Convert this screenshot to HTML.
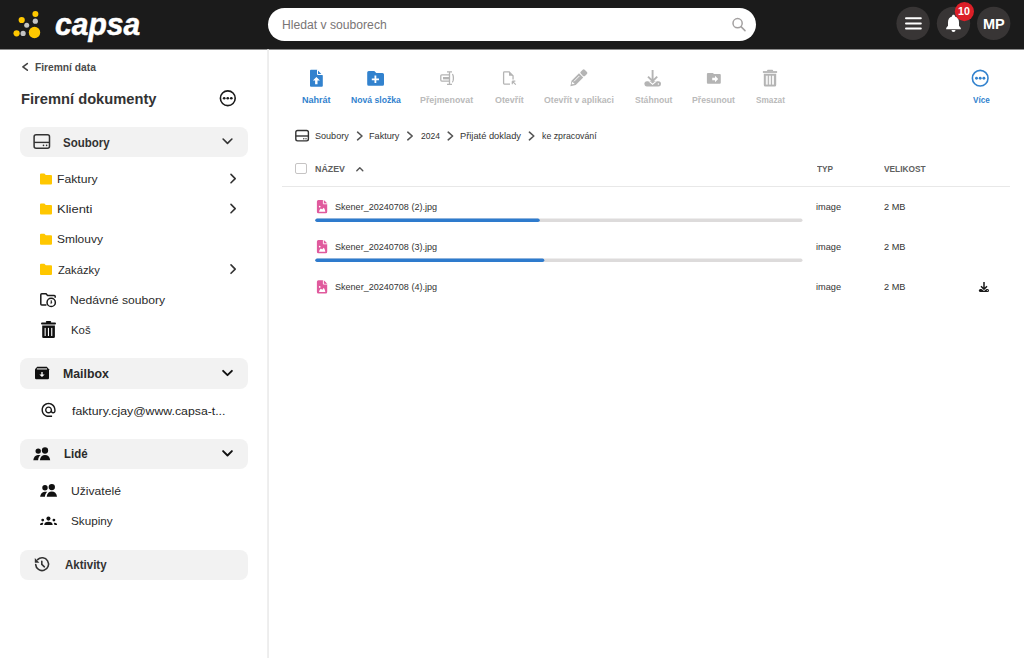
<!DOCTYPE html>
<html><head><meta charset="utf-8"><style>
html,body{margin:0;padding:0;width:1024px;height:658px;overflow:hidden;background:#fff;position:relative}
.t{position:absolute;font-family:"Liberation Sans",sans-serif;line-height:1;white-space:pre;transform-origin:0 0}
.a{position:absolute}
svg.a{overflow:visible}
</style></head><body>
<!-- header -->
<svg class="a" style="left:0;top:0" width="1024" height="52"><rect x="0" y="0" width="1024" height="49.5" fill="#1b1b1b"/></svg>
<svg class="a" style="left:0;top:0" width="60" height="49">
<g fill="#ffc800"><circle cx="35.4" cy="14.1" r="3"/><circle cx="21.7" cy="20" r="3.1"/><circle cx="16.6" cy="33.3" r="3.1"/><circle cx="34.5" cy="32.5" r="5.7"/></g>
<g fill="#c4c4c4"><circle cx="35.3" cy="21.2" r="2.6"/><circle cx="26.7" cy="25.3" r="2.5"/><circle cx="23.1" cy="33.4" r="2.6"/></g>
</svg>
<div class="a" style="left:268px;top:7.7px;width:488px;height:33.6px;border-radius:17px;background:#fff"></div>
<svg class="a" style="left:720px;top:8px" width="40" height="34">
<circle cx="17.6" cy="15.2" r="4.6" fill="none" stroke="#a3a0a0" stroke-width="1.5"/>
<line x1="21" y1="18.6" x2="25" y2="22.6" stroke="#a3a0a0" stroke-width="1.5" stroke-linecap="round"/>
</svg>
<svg class="a" style="left:880px;top:0" width="144" height="49"><g fill="#383535"><circle cx="33.1" cy="23.35" r="16.7"/><circle cx="73.5" cy="23.35" r="16.7"/><circle cx="113.7" cy="23.35" r="16.7"/></g></svg>
<svg class="a" style="left:896px;top:0" width="40" height="49">
<g stroke="#fff" stroke-width="2" stroke-linecap="round"><line x1="10" y1="18.3" x2="24.8" y2="18.3"/><line x1="10" y1="23.5" x2="24.8" y2="23.5"/><line x1="10" y1="28.5" x2="24.8" y2="28.5"/></g>
</svg>
<svg class="a" style="left:940px;top:0" width="30" height="49">
<path d="M13.5 14.7c-0.9 0-1.5 0.7-1.5 1.5v0.3c-2.6 0.7-4 3-4 5.7v3.6l-1.8 2.2v1.3h14.6v-1.3l-1.8-2.2v-3.6c0-2.7-1.4-5-4-5.7v-0.3c0-0.8-0.6-1.5-1.5-1.5z M11.5 30h4a2 2 0 0 1-4 0z" fill="#fff"/>
</svg>
<svg class="a" style="left:940px;top:0" width="40" height="30"><circle cx="24.4" cy="11.55" r="9.6" fill="#dc1f27"/></svg>

<!-- sidebar -->
<svg class="a" style="left:260px;top:49px" width="20" height="609"><rect x="7.3" y="0" width="1.5" height="609" fill="#e9e9e9"/></svg>
<svg class="a" style="left:0;top:49px" width="268" height="609">
<path d="M27.3 14.6 L22.9 17.9 L27.3 21.2" fill="none" stroke="#444" stroke-width="1.6" stroke-linecap="round" stroke-linejoin="round"/>
<circle cx="227.8" cy="49.25" r="7.4" fill="none" stroke="#1a1a1a" stroke-width="1.6"/>
<g fill="#1a1a1a"><circle cx="224.2" cy="49.25" r="1.35"/><circle cx="227.75" cy="49.25" r="1.35"/><circle cx="231.3" cy="49.25" r="1.35"/></g>
</svg>
<div class="a" style="left:20px;top:127px;width:228px;height:30px;border-radius:8px;background:#f2f2f2"></div>
<div class="a" style="left:20px;top:358.3px;width:228px;height:30.4px;border-radius:8px;background:#f2f2f2"></div>
<div class="a" style="left:20px;top:439.2px;width:228px;height:29.6px;border-radius:8px;background:#f2f2f2"></div>
<div class="a" style="left:20px;top:549.5px;width:228px;height:30.2px;border-radius:8px;background:#f2f2f2"></div>
<svg class="a" style="left:0;top:0" width="268" height="658">
<!-- drive icon -->
<rect x="34.1" y="134.8" width="15.4" height="13.4" rx="2" fill="none" stroke="#333" stroke-width="1.5"/>
<line x1="34.1" y1="142.4" x2="49.5" y2="142.4" stroke="#333" stroke-width="1.4"/>
<circle cx="43.5" cy="145.4" r="0.8" fill="#333"/><circle cx="46.6" cy="145.4" r="0.8" fill="#333"/>
<!-- chevrons down -->
<g fill="none" stroke="#333" stroke-width="1.6" stroke-linecap="round" stroke-linejoin="round">
<path d="M223.1 139 L227.5 143.4 L231.9 139"/>
<path d="M223.1 370.8 L227.5 375.2 L231.9 370.8" stroke="#111" stroke-width="1.9"/>
<path d="M223.1 451.1 L227.5 455.5 L231.9 451.1" stroke="#111" stroke-width="1.9"/>
<!-- chevrons right -->
<path d="M231 174.4 L235.2 178.6 L231 182.8"/>
<path d="M231 204.4 L235.2 208.6 L231 212.8"/>
<path d="M231 264.9 L235.2 269.1 L231 273.3"/>
</g>
<!-- folders -->
<g fill="#ffc700">
<path d="M40 174.5 a1 1 0 0 1 1-1 h3.4 l1.4 1.5 h5.2 a1 1 0 0 1 1 1 v7.6 a1 1 0 0 1-1 1 h-10 a1 1 0 0 1-1-1z"/>
<path d="M40 204.5 a1 1 0 0 1 1-1 h3.4 l1.4 1.5 h5.2 a1 1 0 0 1 1 1 v7.6 a1 1 0 0 1-1 1 h-10 a1 1 0 0 1-1-1z"/>
<path d="M40 234.7 a1 1 0 0 1 1-1 h3.4 l1.4 1.5 h5.2 a1 1 0 0 1 1 1 v7.6 a1 1 0 0 1-1 1 h-10 a1 1 0 0 1-1-1z"/>
<path d="M40 264.8 a1 1 0 0 1 1-1 h3.4 l1.4 1.5 h5.2 a1 1 0 0 1 1 1 v7.6 a1 1 0 0 1-1 1 h-10 a1 1 0 0 1-1-1z"/>
</g>
<!-- recent -->
<g fill="none" stroke="#1a1a1a" stroke-width="1.5">
<path d="M46.4 304.95 h-4.6 a1 1 0 0 1-1-1 v-9.3 a1 1 0 0 1 1-1 h4.2 l1.6 1.8 h6.6 a1 1 0 0 1 1 1 v1.2"/>
<circle cx="51.2" cy="302.4" r="4.15"/>
</g>
<path d="M51.2 300.3 l0.6 2.6 l-1 0.6z" fill="#1a1a1a" stroke="#1a1a1a" stroke-width="0.6"/>
<!-- trash -->
<g fill="#111">
<rect x="41" y="322.4" width="15" height="2.1" rx="1"/>
<rect x="45.8" y="321.1" width="5.4" height="2" rx="1"/>
<path d="M42.2 325.4 h12.7 v11.4 a1.3 1.3 0 0 1-1.3 1.3 h-10.1 a1.3 1.3 0 0 1-1.3-1.3z"/>
</g>
<g fill="#fff"><rect x="44.6" y="327.9" width="1.1" height="8.1"/><rect x="47.9" y="327.9" width="1.1" height="8.1"/><rect x="51.2" y="327.9" width="1.1" height="8.1"/></g>
<!-- mailbox icon -->
<path d="M37.2 366.7 h9.6 l2.2 2.6 v8.8 a1.2 1.2 0 0 1-1.2 1.2 h-11.6 a1.2 1.2 0 0 1-1.2-1.2 v-8.8z" fill="#111"/>
<rect x="36.9" y="368.1" width="10.1" height="1.6" fill="#a8a8a8"/>
<path d="M41.35 371.9 h1.3 v2.6 h2 l-2.65 2.6 l-2.65-2.6 h2z" fill="#fff"/>
<!-- @ -->
<path transform="translate(40.1,401.5) scale(0.705)" fill="#1a1a1a" d="M12 1.95c-5.52 0-10 4.48-10 10s4.48 10 10 10h5v-2h-5c-4.34 0-8-3.66-8-8s3.66-8 8-8 8 3.66 8 8v1.43c0 .79-.71 1.57-1.5 1.57s-1.5-.78-1.5-1.57v-1.43c0-2.76-2.24-5-5-5s-5 2.24-5 5 2.24 5 5 5c1.38 0 2.64-.56 3.54-1.47.65.89 1.77 1.47 2.96 1.47 1.97 0 3.5-1.6 3.5-3.57v-1.43c0-5.52-4.48-10-10-10zm0 13c-1.66 0-3-1.34-3-3s1.34-3 3-3 3 1.34 3 3-1.34 3-3 3z"/>
<!-- people (Lide) -->
<g fill="#111" transform="translate(0,0)">
<circle cx="38.2" cy="451.1" r="2.7"/><circle cx="45" cy="450.5" r="3.15"/>
<path d="M33.3 460.2 c0.3-2.8 2-5 4.6-5.1 h2.6 c-1.4 1.3-2.2 3-2.4 5.1z"/>
<path d="M39.9 460.2 c0.3-3.4 2.4-5.3 5.1-5.3 c2.7 0 4.9 1.9 5.2 5.3z"/>
</g>
<g fill="#111" transform="translate(6.8,36.6)">
<circle cx="38.2" cy="451.1" r="2.7"/><circle cx="45" cy="450.5" r="3.15"/>
<path d="M33.3 460.2 c0.3-2.8 2-5 4.6-5.1 h2.6 c-1.4 1.3-2.2 3-2.4 5.1z"/>
<path d="M39.9 460.2 c0.3-3.4 2.4-5.3 5.1-5.3 c2.7 0 4.9 1.9 5.2 5.3z"/>
</g>
<!-- groups -->
<g fill="#111">
<circle cx="48.45" cy="518.6" r="2.05"/><circle cx="42.7" cy="520.1" r="1.4"/><circle cx="53.9" cy="520.1" r="1.4"/>
<path d="M44.2 525 c0.2-2.2 1.6-3.3 4.25-3.3 c2.65 0 4.05 1.1 4.25 3.3z"/>
<path d="M40 525 c0.1-1.4 1-2.2 2.3-2.2 c.4 0 .7 .05 1 .2 c-.4 .5-.6 1.2-.7 2z"/>
<path d="M57.1 525 c-0.1-1.4-1-2.2-2.3-2.2 c-.4 0-.7 .05-1 .2 c.4 .5 .6 1.2 .7 2z"/>
</g>
<!-- history -->
<g fill="none" stroke="#333" stroke-width="1.6" stroke-linecap="round">
<path d="M35.7 564.6 A6.4 6.4 0 1 0 37.6 559.6"/>
<path d="M41.8 561.2 v3.1 l2.6 2.5"/>
</g>
<path d="M34.8 558 l0 4.8 l4.6 0z" fill="#333"/>
</svg>

<!-- toolbar icons -->
<svg class="a" style="left:280px;top:60px" width="744" height="35">
<!-- upload file -->
<path d="M31 9.8 h6.2 l5.6 5.6 v10.4 a1 1 0 0 1-1 1 h-10.8 a1 1 0 0 1-1-1 v-15 a1 1 0 0 1 1-1z" fill="#3282ce"/>
<path d="M37.5 9.8 v4.7 h5.3" fill="none" stroke="#fff" stroke-width="1"/>
<path d="M32.9 20.6 l3.5-3.7 l3.5 3.7 h-2.4 v3.6 h-2.4 v-3.6z" fill="#fff"/>
<!-- folder plus -->
<path d="M87.2 12.4 a1.5 1.5 0 0 1 1.5-1.5 h5.6 l2 2 h6.2 a1.5 1.5 0 0 1 1.5 1.5 v9.8 a1.5 1.5 0 0 1-1.5 1.5 h-13.8 a1.5 1.5 0 0 1-1.5-1.5z" fill="#3282ce"/>
<path d="M95.4 15.6 v7.4 M91.8 19.3 h7.2" stroke="#fff" stroke-width="1.8"/>
<!-- rename (gray) -->
<g fill="none" stroke="#b4b4b4" stroke-width="1.3">
<path d="M169.4 14.85 h-7.6 a1 1 0 0 0-1 1 v4.2 a1 1 0 0 0 1 1 h7.6"/>
<path d="M169.5 11.3 v13.5 M167 11.9 h5 M167 24.4 h5"/>
<path d="M172.1 14.4 a1.3 3.8 0 0 1 0 7.6"/>
</g>
<rect x="163" y="17" width="6" height="2.4" fill="#b4b4b4"/>
<!-- open file -->
<g fill="none" stroke="#b4b4b4" stroke-width="1.3">
<path d="M230 24.05 h-5.6 a0.8 0.8 0 0 1-0.8-0.8 v-10.6 a0.8 0.8 0 0 1 0.8-0.8 h4.6 l4.05 4.05 v3.6"/>
</g>
<path d="M229 11.2 v4.5 h4.7z" fill="#b4b4b4"/>
<path d="M235.8 24.7 l-3.3-3.3 M232.3 21.2 v3 M232.3 21.2 h3" stroke="#b4b4b4" stroke-width="1.2" fill="none"/>
<!-- pencil -->
<g transform="translate(290.4,26.2) rotate(-45)" fill="#b4b4b4">
<path d="M0 0 L4.6 -3 H15.2 V3 H4.6z"/>
<rect x="16.2" y="-3" width="5.6" height="6" rx="1.4"/>
</g>
<g transform="translate(290.4,26.2) rotate(-45)" fill="none" stroke="#fff" stroke-width="0.9">
<path d="M6 -0.9 H13.5"/>
<path d="M2.2 -0.6 L4.6 -1.8 V1.6 z" fill="#fff" stroke="none"/>
</g>
<!-- download -->
<path d="M372.6 10 v10.6 M368 16.6 l4.6 4.6 l4.6-4.6" fill="none" stroke="#b4b4b4" stroke-width="1.9"/>
<rect x="364.4" y="21.3" width="16.6" height="5.1" rx="2.55" fill="#b4b4b4"/>
<path d="M368.2 21.3 l4.4 3.7 l4.4-3.7 h-1.6 l-2.8 2.3 l-2.8-2.3z" fill="#fff"/>
<circle cx="378.4" cy="23.9" r="0.75" fill="#fff"/>
<!-- move folder -->
<path d="M426.9 13.9 a1 1 0 0 1 1-1 h5 l1.1 1 h5.8 a1 1 0 0 1 1 1 v7.8 a1 1 0 0 1-1 1 h-11.9 a1 1 0 0 1-1-1z" fill="#b4b4b4"/>
<path d="M432.2 17.7 h2.8 v-1.9 l3.2 3.2 l-3.2 3.2 v-1.9 h-2.8z" fill="#fff"/>
<!-- trash gray -->
<rect x="482.9" y="11.1" width="14.2" height="1.8" fill="#b4b4b4"/>
<path d="M487.1 11.1 v-0.6 a0.8 0.8 0 0 1 0.8-0.8 h4.4 a0.8 0.8 0 0 1 0.8 0.8 v0.6z" fill="#b4b4b4"/>
<path d="M483.8 13.8 h12.4 v11.1 a1.5 1.5 0 0 1-1.5 1.5 h-9.4 a1.5 1.5 0 0 1-1.5-1.5z" fill="#b4b4b4"/>
<g fill="#f4f4f4"><rect x="485.8" y="15.7" width="2" height="8.9"/><rect x="488.9" y="15.7" width="2" height="8.9"/><rect x="492" y="15.7" width="2" height="8.9"/></g>
<!-- more circle -->
<circle cx="700.2" cy="18.2" r="7.8" fill="none" stroke="#3282ce" stroke-width="1.6"/>
<g fill="#3282ce"><circle cx="696.5" cy="18.2" r="1.45"/><circle cx="700.2" cy="18.2" r="1.45"/><circle cx="703.9" cy="18.2" r="1.45"/></g>
</svg>

<!-- breadcrumb -->
<svg class="a" style="left:280px;top:120px" width="340" height="30">
<rect x="15.8" y="10.5" width="12.6" height="10.4" rx="1.8" fill="none" stroke="#333" stroke-width="1.4"/>
<line x1="15.8" y1="16" x2="28.4" y2="16" stroke="#333" stroke-width="1.4"/>
<circle cx="23.8" cy="18.7" r="0.7" fill="#333"/><circle cx="26" cy="18.7" r="0.7" fill="#333"/>
<g fill="none" stroke="#555" stroke-width="1.6" stroke-linecap="round" stroke-linejoin="round">
<path d="M77.6 12.2 L82 16 L77.6 19.8"/>
<path d="M127.8 12.2 L132.2 16 L127.8 19.8"/>
<path d="M168.2 12.2 L172.6 16 L168.2 19.8"/>
<path d="M249.4 12.2 L253.8 16 L249.4 19.8"/>
</g>
</svg>

<!-- table -->
<div class="a" style="left:295.3px;top:162.7px;width:9.7px;height:9.7px;border:1.7px solid #c6c4c4;border-radius:2px"></div>
<svg class="a" style="left:350px;top:160px" width="20" height="20">
<path d="M6.8 10.8 L9.8 7.8 L12.8 10.8" fill="none" stroke="#555" stroke-width="1.4" stroke-linecap="round" stroke-linejoin="round"/>
</svg>
<div class="a" style="left:282px;top:186px;width:728px;height:1px;background:#e8e8e8"></div>
<svg class="a" style="left:300px;top:200px" width="520" height="80">
<rect x="15.3" y="18.4" width="487.2" height="3.6" rx="1.8" fill="#dddbdb"/>
<rect x="15.3" y="18.4" width="224.4" height="3.6" rx="1.8" fill="#2e7bcd"/>
<rect x="15.3" y="58.4" width="487.2" height="3.6" rx="1.8" fill="#dddbdb"/>
<rect x="15.3" y="58.4" width="229" height="3.6" rx="1.8" fill="#2e7bcd"/>
</svg>
<svg class="a" style="left:310px;top:190px" width="30" height="110">
<g transform="translate(0,0)">
<path d="M8.4 9.9 h5.3 l3.5 3.5 v8.4 a1.5 1.5 0 0 1-1.5 1.5 h-7.3 a1.5 1.5 0 0 1-1.5-1.5 v-10.4 a1.5 1.5 0 0 1 1.5-1.5z" fill="#e05a9d"/>
<path d="M13.4 9.6 v4.2 h4.1" fill="none" stroke="#fff" stroke-width="0.9"/>
<path d="M14.1 10.5 v2.6 h2.6z" fill="#e05a9d"/>
<path d="M9 21.7 c0.3-1.6 1-2.8 1.9-3.3 c0.6 0.4 1 0.8 1.3 1.2 c0.5-0.9 1-1.5 1.6-1.8 c0.8 0.9 1.3 2.3 1.5 3.9z" fill="#fff"/>
<circle cx="9.7" cy="16.6" r="0.85" fill="#fff"/>
</g>
<g transform="translate(0,40)">
<path d="M8.4 9.9 h5.3 l3.5 3.5 v8.4 a1.5 1.5 0 0 1-1.5 1.5 h-7.3 a1.5 1.5 0 0 1-1.5-1.5 v-10.4 a1.5 1.5 0 0 1 1.5-1.5z" fill="#e05a9d"/>
<path d="M13.4 9.6 v4.2 h4.1" fill="none" stroke="#fff" stroke-width="0.9"/>
<path d="M14.1 10.5 v2.6 h2.6z" fill="#e05a9d"/>
<path d="M9 21.7 c0.3-1.6 1-2.8 1.9-3.3 c0.6 0.4 1 0.8 1.3 1.2 c0.5-0.9 1-1.5 1.6-1.8 c0.8 0.9 1.3 2.3 1.5 3.9z" fill="#fff"/>
<circle cx="9.7" cy="16.6" r="0.85" fill="#fff"/>
</g>
<g transform="translate(0,80.3)">
<path d="M8.4 9.9 h5.3 l3.5 3.5 v8.4 a1.5 1.5 0 0 1-1.5 1.5 h-7.3 a1.5 1.5 0 0 1-1.5-1.5 v-10.4 a1.5 1.5 0 0 1 1.5-1.5z" fill="#e05a9d"/>
<path d="M13.4 9.6 v4.2 h4.1" fill="none" stroke="#fff" stroke-width="0.9"/>
<path d="M14.1 10.5 v2.6 h2.6z" fill="#e05a9d"/>
<path d="M9 21.7 c0.3-1.6 1-2.8 1.9-3.3 c0.6 0.4 1 0.8 1.3 1.2 c0.5-0.9 1-1.5 1.6-1.8 c0.8 0.9 1.3 2.3 1.5 3.9z" fill="#fff"/>
<circle cx="9.7" cy="16.6" r="0.85" fill="#fff"/>
</g>
</svg>
<svg class="a" style="left:970px;top:275px" width="30" height="25">
<path d="M14 6.9 v7.4 M11 11.3 l3 3 l3-3" fill="none" stroke="#1a1a1a" stroke-width="1.5"/>
<rect x="8.9" y="13.9" width="10.1" height="3.1" rx="1.5" fill="#1a1a1a"/>
<path d="M11.4 13.9 l2.6 2.1 l2.6-2.1 h-1 l-1.6 1.2 l-1.6-1.2z" fill="#fff"/>
<circle cx="17.3" cy="15.45" r="0.5" fill="#fff"/>
</svg>

<span class="t" style="left:55.22px;top:10px;font-size:30.726px;font-weight:700;font-style:italic;color:#fff;letter-spacing:0px;transform:scaleX(0.9776);-webkit-text-stroke:0.5px #fff;">capsa</span>
<span class="t" style="left:282.48px;top:20px;font-size:11.872px;font-weight:400;font-style:normal;color:#797575;letter-spacing:0px;transform:scaleX(1.0248);">Hledat v souborech</span>
<span class="t" style="left:983.08px;top:17px;font-size:14.246px;font-weight:700;font-style:normal;color:#fff;letter-spacing:0px;transform:scaleX(1.0200);">MP</span>
<span class="t" style="left:958.37px;top:7px;font-size:10.335px;font-weight:700;font-style:normal;color:#fff;letter-spacing:0px;transform:scaleX(1.0300);">10</span>
<span class="t" style="left:35.24px;top:62px;font-size:10.615px;font-weight:700;font-style:normal;color:#4a4a4a;letter-spacing:0px;transform:scaleX(0.9645);">Firemní data</span>
<span class="t" style="left:20.77px;top:92px;font-size:14.246px;font-weight:700;font-style:normal;color:#333;letter-spacing:0px;transform:scaleX(1.0323);">Firemní dokumenty</span>
<span class="t" style="left:63.27px;top:137px;font-size:12.43px;font-weight:700;font-style:normal;color:#333;letter-spacing:0px;transform:scaleX(0.9265);">Soubory</span>
<span class="t" style="left:57.04px;top:174px;font-size:11.453px;font-weight:400;font-style:normal;color:#2a2a2a;letter-spacing:0px;transform:scaleX(1.0649);">Faktury</span>
<span class="t" style="left:56.97px;top:204px;font-size:11.453px;font-weight:400;font-style:normal;color:#2a2a2a;letter-spacing:0px;transform:scaleX(1.1345);">Klienti</span>
<span class="t" style="left:57.05px;top:234px;font-size:11.453px;font-weight:400;font-style:normal;color:#2a2a2a;letter-spacing:0px;transform:scaleX(1.0465);">Smlouvy</span>
<span class="t" style="left:57.80px;top:265px;font-size:11.453px;font-weight:400;font-style:normal;color:#2a2a2a;letter-spacing:0px;transform:scaleX(0.9810);">Zakázky</span>
<span class="t" style="left:70.44px;top:295px;font-size:11.453px;font-weight:400;font-style:normal;color:#2a2a2a;letter-spacing:0px;transform:scaleX(1.0618);">Nedávné soubory</span>
<span class="t" style="left:70.51px;top:325px;font-size:11.453px;font-weight:400;font-style:normal;color:#2a2a2a;letter-spacing:0px;transform:scaleX(0.9944);">Koš</span>
<span class="t" style="left:63.41px;top:368px;font-size:12.43px;font-weight:700;font-style:normal;color:#2a2a2a;letter-spacing:0px;transform:scaleX(0.9911);">Mailbox</span>
<span class="t" style="left:71.80px;top:406px;font-size:11.453px;font-weight:400;font-style:normal;color:#1f1f1f;letter-spacing:0px;transform:scaleX(1.0732);">faktury.cjay@www.capsa-t...</span>
<span class="t" style="left:63.68px;top:448px;font-size:12.43px;font-weight:700;font-style:normal;color:#2a2a2a;letter-spacing:0px;transform:scaleX(0.9208);">Lidé</span>
<span class="t" style="left:70.54px;top:486px;font-size:11.453px;font-weight:400;font-style:normal;color:#2a2a2a;letter-spacing:0px;transform:scaleX(1.0609);">Uživatelé</span>
<span class="t" style="left:70.58px;top:516px;font-size:11.453px;font-weight:400;font-style:normal;color:#2a2a2a;letter-spacing:0px;transform:scaleX(1.0225);">Skupiny</span>
<span class="t" style="left:64.80px;top:559px;font-size:12.43px;font-weight:700;font-style:normal;color:#333;letter-spacing:0px;transform:scaleX(0.9267);">Aktivity</span>
<span class="t" style="left:301.92px;top:96px;font-size:9.218px;font-weight:700;font-style:normal;color:#3282ce;letter-spacing:0px;transform:scaleX(0.9821);">Nahrát</span>
<span class="t" style="left:350.56px;top:96px;font-size:9.218px;font-weight:700;font-style:normal;color:#3282ce;letter-spacing:0px;transform:scaleX(0.9365);">Nová složka</span>
<span class="t" style="left:420.44px;top:96px;font-size:9.218px;font-weight:700;font-style:normal;color:#bababa;letter-spacing:0px;transform:scaleX(0.9611);">Přejmenovat</span>
<span class="t" style="left:494.70px;top:96px;font-size:9.218px;font-weight:700;font-style:normal;color:#bababa;letter-spacing:0px;transform:scaleX(0.9655);">Otevřít</span>
<span class="t" style="left:544.35px;top:96px;font-size:9.218px;font-weight:700;font-style:normal;color:#bababa;letter-spacing:0px;transform:scaleX(0.9486);">Otevřít v aplikaci</span>
<span class="t" style="left:634.50px;top:96px;font-size:9.218px;font-weight:700;font-style:normal;color:#bababa;letter-spacing:0px;transform:scaleX(0.9350);">Stáhnout</span>
<span class="t" style="left:692.36px;top:96px;font-size:9.218px;font-weight:700;font-style:normal;color:#bababa;letter-spacing:0px;transform:scaleX(0.9432);">Přesunout</span>
<span class="t" style="left:756.20px;top:96px;font-size:9.218px;font-weight:700;font-style:normal;color:#bababa;letter-spacing:0px;transform:scaleX(0.8969);">Smazat</span>
<span class="t" style="left:972.50px;top:96px;font-size:9.218px;font-weight:700;font-style:normal;color:#3282ce;letter-spacing:0px;transform:scaleX(0.8789);">Více</span>
<span class="t" style="left:315.16px;top:131px;font-size:9.637px;font-weight:400;font-style:normal;color:#333;letter-spacing:0px;transform:scaleX(0.9400);">Soubory</span>
<span class="t" style="left:369.35px;top:131px;font-size:9.637px;font-weight:400;font-style:normal;color:#333;letter-spacing:0px;transform:scaleX(0.9484);">Faktury</span>
<span class="t" style="left:421.10px;top:131px;font-size:9.637px;font-weight:400;font-style:normal;color:#333;letter-spacing:0px;transform:scaleX(0.8857);">2024</span>
<span class="t" style="left:460.43px;top:131px;font-size:9.637px;font-weight:400;font-style:normal;color:#333;letter-spacing:0px;transform:scaleX(0.9653);">Přijaté doklady</span>
<span class="t" style="left:541.59px;top:131px;font-size:9.637px;font-weight:400;font-style:normal;color:#333;letter-spacing:0px;transform:scaleX(0.9110);">ke zpracování</span>
<span class="t" style="left:315.35px;top:165px;font-size:9.358px;font-weight:700;font-style:normal;color:#606060;letter-spacing:0px;transform:scaleX(0.9452);">NÁZEV</span>
<span class="t" style="left:816.80px;top:165px;font-size:9.358px;font-weight:700;font-style:normal;color:#606060;letter-spacing:0px;transform:scaleX(0.8833);">TYP</span>
<span class="t" style="left:883.80px;top:165px;font-size:9.358px;font-weight:700;font-style:normal;color:#606060;letter-spacing:0px;transform:scaleX(0.8915);">VELIKOST</span>
<span class="t" style="left:335.46px;top:202px;font-size:9.637px;font-weight:400;font-style:normal;color:#333;letter-spacing:0px;transform:scaleX(0.9393);">Skener_20240708 (2).jpg</span>
<span class="t" style="left:815.84px;top:202px;font-size:9.637px;font-weight:400;font-style:normal;color:#333;letter-spacing:0px;transform:scaleX(0.9560);">image</span>
<span class="t" style="left:883.80px;top:202px;font-size:9.637px;font-weight:400;font-style:normal;color:#333;letter-spacing:0px;transform:scaleX(0.9545);">2 MB</span>
<span class="t" style="left:335.46px;top:242px;font-size:9.637px;font-weight:400;font-style:normal;color:#333;letter-spacing:0px;transform:scaleX(0.9393);">Skener_20240708 (3).jpg</span>
<span class="t" style="left:815.84px;top:242px;font-size:9.637px;font-weight:400;font-style:normal;color:#333;letter-spacing:0px;transform:scaleX(0.9560);">image</span>
<span class="t" style="left:883.80px;top:242px;font-size:9.637px;font-weight:400;font-style:normal;color:#333;letter-spacing:0px;transform:scaleX(0.9545);">2 MB</span>
<span class="t" style="left:335.46px;top:282px;font-size:9.637px;font-weight:400;font-style:normal;color:#333;letter-spacing:0px;transform:scaleX(0.9393);">Skener_20240708 (4).jpg</span>
<span class="t" style="left:815.84px;top:282px;font-size:9.637px;font-weight:400;font-style:normal;color:#333;letter-spacing:0px;transform:scaleX(0.9560);">image</span>
<span class="t" style="left:883.80px;top:282px;font-size:9.637px;font-weight:400;font-style:normal;color:#333;letter-spacing:0px;transform:scaleX(0.9545);">2 MB</span>
</body></html>
